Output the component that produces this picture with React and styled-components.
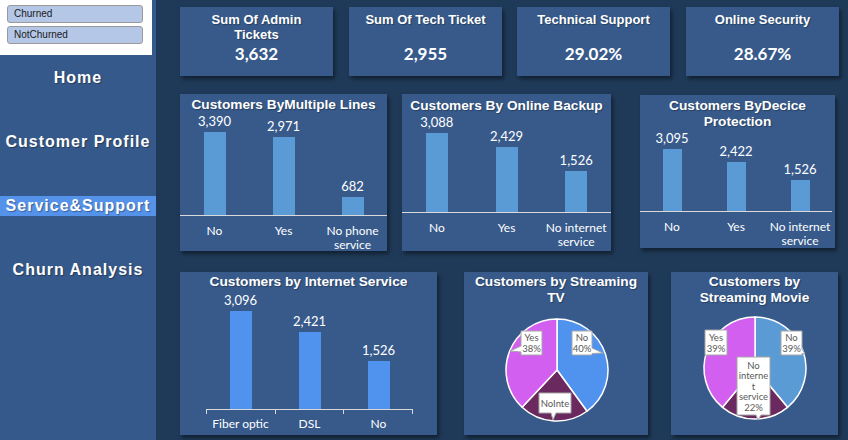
import React from "react";
import styled, { createGlobalStyle } from "styled-components";

const GlobalStyle = createGlobalStyle`
  html, body {
    margin: 0;
    padding: 0;
  }
  body {
    background-color: #1f3a58;
    font-family: "Liberation Sans", Arial, sans-serif;
  }
`;

const Page = styled.div`
  display: flex;
  width: 848px;
  height: 440px;
  background-color: #1f3a58;
  overflow: hidden;
`;

/* ---------- sidebar ---------- */

const Sidebar = styled.aside`
  width: 156px;
  flex-shrink: 0;
  background-color: #36598b;
  display: flex;
  flex-direction: column;
`;

const SlicerBox = styled.div`
  width: 152px;
  height: 55px;
  box-sizing: border-box;
  background-color: #ffffff;
  padding: 5px 9px 0 7px;
  display: flex;
  flex-direction: column;
  gap: 3px;
`;

const SlicerButton = styled.div`
  height: 18px;
  box-sizing: border-box;
  border: 1px solid #9a9a9a;
  border-radius: 3px;
  background-color: #b4c7e7;
  color: #1a1a1a;
  font-size: 10px;
  line-height: 16px;
  padding-left: 6px;
`;

const Nav = styled.nav`
  display: flex;
  flex-direction: column;
  gap: 44px;
  margin-top: 13px;
`;

const NavItem = styled.div`
  height: 20px;
  line-height: 20px;
  text-align: center;
  white-space: nowrap;
  font-size: 16px;
  font-weight: bold;
  letter-spacing: 1px;
  color: #ffffff;
  text-shadow: 1px 1px 1px rgba(0, 0, 0, 0.35);
  background-color: ${(p) => (p.$active ? "#5592ea" : "transparent")};
`;

/* ---------- main area ---------- */

const Main = styled.main`
  flex: 1;
  padding: 7px 0 0 24px;
  display: flex;
  flex-direction: column;
`;

const Row = styled.div`
  display: flex;
  align-items: flex-start;
  margin-top: ${(p) => p.$mt || 0}px;
`;

const Card = styled.div`
  width: ${(p) => p.$w}px;
  height: ${(p) => p.$h}px;
  margin-left: ${(p) => p.$ml || 0}px;
  margin-top: ${(p) => p.$mt || 0}px;
  flex-shrink: 0;
  box-sizing: border-box;
  background-color: #375a8b;
  box-shadow: 2px 3px 4px rgba(0, 0, 0, 0.45);
  display: flex;
  flex-direction: column;
  color: #ffffff;
`;

const KpiTitle = styled.div`
  padding-top: 5px;
  font-size: 13px;
  font-weight: bold;
  line-height: 15px;
  text-align: center;
  white-space: pre-line;
  text-shadow: 1px 1px 1px rgba(0, 0, 0, 0.3);
`;

const KpiValue = styled.div`
  margin-top: auto;
  padding-bottom: 12px;
  text-align: center;
  font-family: Lato, "Open Sans", sans-serif;
  font-size: 17px;
  font-weight: 700;
  line-height: 20px;
`;

const ChartTitle = styled.div`
  padding-top: ${(p) => p.$pt || 0}px;
  font-size: 13.7px;
  font-weight: bold;
  line-height: 16px;
  text-align: center;
  white-space: pre-line;
  text-shadow: 1px 1px 1px rgba(0, 0, 0, 0.3);
  flex-shrink: 0;
`;

const Plot = styled.div`
  height: ${(p) => p.$h}px;
  flex-shrink: 0;
  display: flex;
  align-items: flex-end;
  margin: 0 ${(p) => p.$mr || 0}px 0 ${(p) => p.$ml || 0}px;
  border-bottom: 1px solid #d9d9d9;
`;

const BarCol = styled.div`
  flex: 1;
  height: 100%;
  display: flex;
  flex-direction: column;
  align-items: center;
  justify-content: flex-end;
`;

const DataLabel = styled.div`
  margin-bottom: 3px;
  font-family: Lato, "Open Sans", sans-serif;
  font-size: 13px;
  line-height: 16px;
  white-space: nowrap;
`;

const Bar = styled.div`
  width: ${(p) => p.$w}px;
  background-color: ${(p) => p.$color};
`;

const TickRow = styled.div`
  display: flex;
  height: 4px;
  margin: 0 ${(p) => p.$mr || 0}px 0 ${(p) => p.$ml || 0}px;
  border-right: 1px solid #d9d9d9;
`;

const Tick = styled.div`
  flex: 1;
  border-left: 1px solid #d9d9d9;
`;

const CatRow = styled.div`
  display: flex;
  margin: 0 ${(p) => p.$mr || 0}px 0 ${(p) => p.$ml || 0}px;
  padding-top: ${(p) => p.$pt || 0}px;
`;

const Cat = styled.div`
  flex: 1;
  text-align: center;
  font-family: Lato, "Open Sans", sans-serif;
  font-size: 12px;
  line-height: 14px;
  white-space: pre-line;
`;

const PieSvg = styled.svg`
  display: block;
  flex-shrink: 0;
`;

const CalloutText = styled.text`
  font-family: Lato, "Open Sans", sans-serif;
  font-size: 9.5px;
  fill: #595959;
`;

/* ---------- data ---------- */

const kpis = [
  { title: "Sum Of Admin\nTickets", value: "3,632", ml: 0 },
  { title: "Sum Of Tech Ticket", value: "2,955", ml: 16 },
  { title: "Technical Support", value: "29.02%", ml: 15 },
  { title: "Online Security", value: "28.67%", ml: 16 },
];

const barCharts = [
  {
    title: "Customers ByMultiple Lines",
    w: 207, h: 157, ml: 0, mt: 0, pt: 3, plotH: 102, maxPx: 89, barW: 22,
    data: [
      { label: "No", value: 3390 },
      { label: "Yes", value: 2971 },
      { label: "No phone\nservice", value: 682 },
    ],
  },
  {
    title: "Customers By Online Backup",
    w: 209, h: 157, ml: 15, mt: 0, pt: 4, plotH: 98, maxPx: 83, barW: 22,
    data: [
      { label: "No", value: 3088 },
      { label: "Yes", value: 2429 },
      { label: "No internet\nservice", value: 1526 },
    ],
  },
  {
    title: "Customers ByDecice\nProtection",
    w: 195, h: 153, ml: 29, mt: 1, pt: 3, plotH: 81, maxPx: 62, barW: 19, mr: 3,
    data: [
      { label: "No", value: 3095 },
      { label: "Yes", value: 2422 },
      { label: "No internet\nservice", value: 1526 },
    ],
  },
];

const internetData = [
  { label: "Fiber optic", value: 3096 },
  { label: "DSL", value: 2421 },
  { label: "No", value: 1526 },
];

const PINK = "#d35ff0";
const MAROON = "#6b2a5f";

const pies = [
  {
    title: "Customers by Streaming\nTV",
    w: 184, ml: 27, cx: 93, cy: 64,
    slices: [
      { share: 0.4, color: "#4f93ef" },
      { share: 0.22, color: MAROON },
      { share: 0.38, color: PINK },
    ],
    callouts: [
      { d: "M108,25 H128 V42 L139,47 L128,47.5 V49 H108 Z", x: 118, y: 31.3, lines: ["No", "40%"] },
      { d: "M57,25 H78 V49 H57 V46 L46,45 L57,40 Z", x: 67.5, y: 31.3, lines: ["Yes", "38%"] },
      { d: "M75,87 H107 V107 H92 L89,114 L87,107 H75 Z", x: 91, y: 97, lines: ["NoInte"] },
    ],
  },
  {
    title: "Customers by\nStreaming Movie",
    w: 167, ml: 23, cx: 84, cy: 62,
    slices: [
      { share: 0.39, color: "#5b9bd5" },
      { share: 0.22, color: MAROON },
      { share: 0.39, color: PINK },
    ],
    callouts: [
      { d: "M34,24 H56 V49 H34 Z", x: 45, y: 31, lines: ["Yes", "39%"] },
      { d: "M110,25 H131 V43 L134,48 L131,47.5 V49 H110 Z", x: 120.5, y: 31.3, lines: ["No", "39%"] },
      {
        d: "M66,51 H99 V109 H90 L87,114 L85,109 H66 Z",
        x: 82.5, y: 59, lines: ["No", "interne", "t", "service", "22%"],
      },
    ],
  },
];

const fmt = (n) => n.toLocaleString("en-US");

/* ---------- pieces ---------- */

const BarChartCard = ({ chart }) => {
  const max = Math.max(...chart.data.map((d) => d.value));
  return (
    <Card $w={chart.w} $h={chart.h} $ml={chart.ml} $mt={chart.mt}>
      <ChartTitle $pt={chart.pt}>{chart.title}</ChartTitle>
      <Plot $h={chart.plotH} $mr={chart.mr}>
        {chart.data.map((d) => (
          <BarCol key={d.label}>
            <DataLabel>{fmt(d.value)}</DataLabel>
            <Bar
              $w={chart.barW}
              $color="#5b9bd5"
              style={{ height: Math.round((d.value / max) * chart.maxPx) }}
            />
          </BarCol>
        ))}
      </Plot>
      <CatRow $pt={8} $mr={chart.mr}>
        {chart.data.map((d) => (
          <Cat key={d.label}>{d.label}</Cat>
        ))}
      </CatRow>
    </Card>
  );
};

const InternetCard = () => {
  const max = Math.max(...internetData.map((d) => d.value));
  return (
    <Card $w={257} $h={163}>
      <ChartTitle $pt={2}>Customers by Internet Service</ChartTitle>
      <Plot $h={119} $ml={26} $mr={24}>
        {internetData.map((d) => (
          <BarCol key={d.label}>
            <DataLabel>{fmt(d.value)}</DataLabel>
            <Bar
              $w={22}
              $color="#4f93ef"
              style={{ height: Math.round((d.value / max) * 98) }}
            />
          </BarCol>
        ))}
      </Plot>
      <TickRow $ml={26} $mr={24}>
        {internetData.map((d) => (
          <Tick key={d.label} />
        ))}
      </TickRow>
      <CatRow $pt={3} $ml={26} $mr={24}>
        {internetData.map((d) => (
          <Cat key={d.label}>{d.label}</Cat>
        ))}
      </CatRow>
    </Card>
  );
};

const point = (cx, cy, r, f) => {
  const a = f * Math.PI * 2;
  return [cx + r * Math.sin(a), cy - r * Math.cos(a)];
};

const slicePath = (cx, cy, r, f0, f1) => {
  const [x0, y0] = point(cx, cy, r, f0);
  const [x1, y1] = point(cx, cy, r, f1);
  const large = f1 - f0 > 0.5 ? 1 : 0;
  return `M${cx},${cy} L${x0.toFixed(2)},${y0.toFixed(2)} A${r},${r} 0 ${large} 1 ${x1.toFixed(2)},${y1.toFixed(2)} Z`;
};

const PieCard = ({ pie }) => {
  let acc = 0;
  const r = 51;
  return (
    <Card $w={pie.w} $h={163} $ml={pie.ml}>
      <ChartTitle $pt={2}>{pie.title}</ChartTitle>
      <PieSvg width={pie.w} height={125} viewBox={`0 0 ${pie.w} 125`}>
        {pie.slices.map((s, i) => {
          const f0 = acc;
          acc += s.share;
          return (
            <path
              key={i}
              d={slicePath(pie.cx, pie.cy, r, f0, acc)}
              fill={s.color}
              stroke="#ffffff"
              strokeWidth="1.5"
              strokeLinejoin="round"
            />
          );
        })}
        {pie.callouts.map((c, i) => (
          <g key={i}>
            <path d={c.d} fill="#ffffff" stroke="#a6a6a6" strokeWidth="1" />
            {c.lines.map((line, j) => (
              <CalloutText
                key={j}
                x={c.x}
                y={c.y + j * (c.lines.length > 2 ? 10.65 : 11.4)}
                textAnchor="middle"
                dominantBaseline="central"
              >
                {line}
              </CalloutText>
            ))}
          </g>
        ))}
      </PieSvg>
    </Card>
  );
};

const App = () => {
  return (
    <Page>
      <GlobalStyle />
      <Sidebar>
        <SlicerBox>
          <SlicerButton>Churned</SlicerButton>
          <SlicerButton>NotChurned</SlicerButton>
        </SlicerBox>
        <Nav>
          <NavItem>Home</NavItem>
          <NavItem>Customer Profile</NavItem>
          <NavItem $active>Service&amp;Support</NavItem>
          <NavItem>Churn Analysis</NavItem>
        </Nav>
      </Sidebar>
      <Main>
        <Row>
          {kpis.map((k) => (
            <Card key={k.title} $w={153} $h={69} $ml={k.ml}>
              <KpiTitle>{k.title}</KpiTitle>
              <KpiValue>{k.value}</KpiValue>
            </Card>
          ))}
        </Row>
        <Row $mt={18}>
          {barCharts.map((c) => (
            <BarChartCard key={c.title} chart={c} />
          ))}
        </Row>
        <Row $mt={21}>
          <InternetCard />
          {pies.map((p) => (
            <PieCard key={p.title} pie={p} />
          ))}
        </Row>
      </Main>
    </Page>
  );
};

export default App;
